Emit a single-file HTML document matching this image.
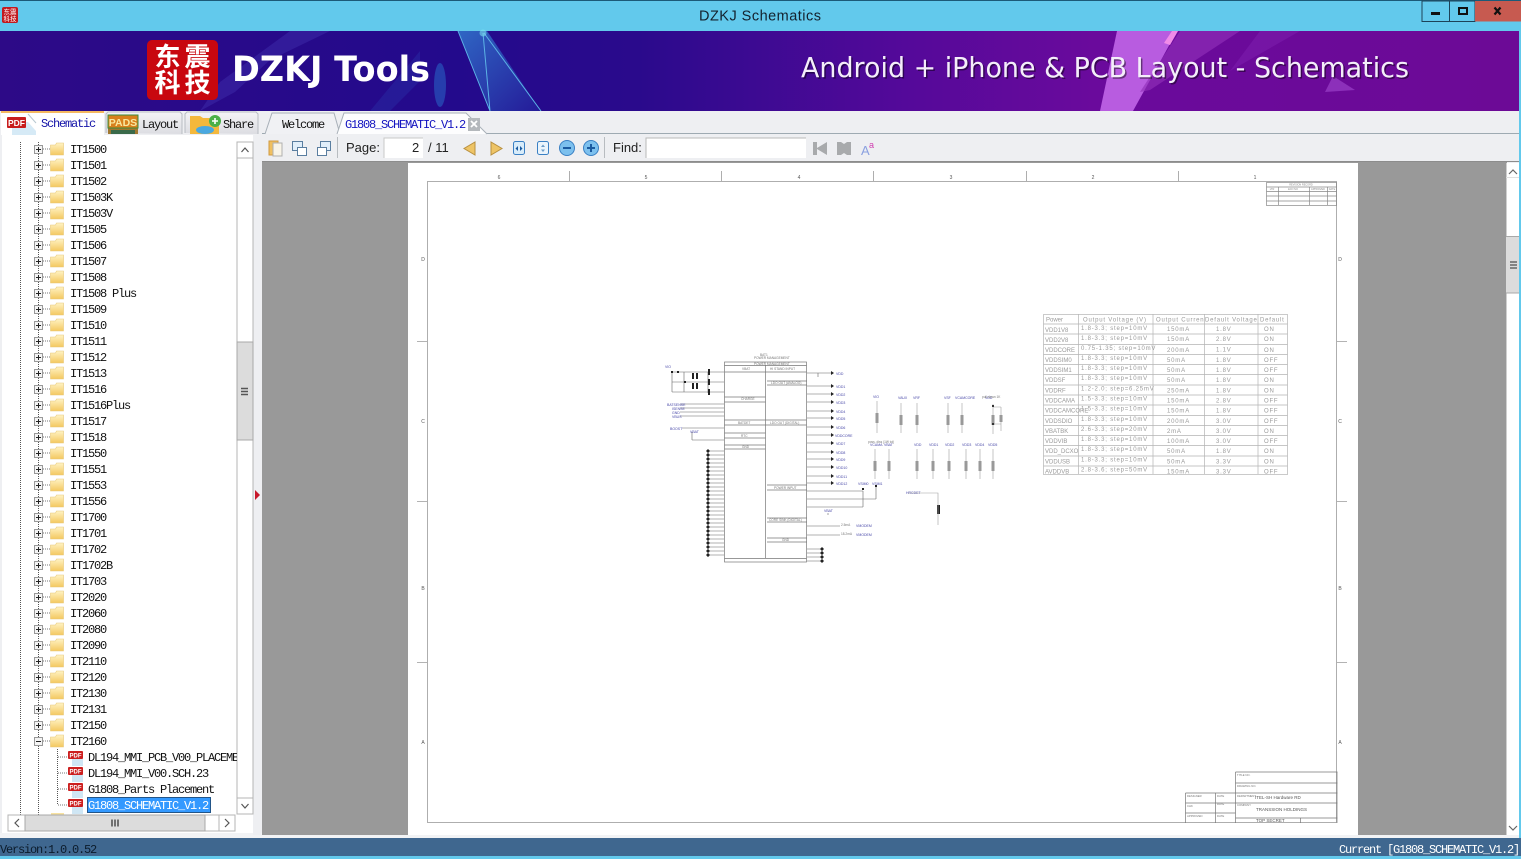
<!DOCTYPE html>
<html><head><meta charset="utf-8"><title>DZKJ Schematics</title>
<style>
html,body{margin:0;padding:0;width:1521px;height:859px;overflow:hidden;background:#62c9ec;font-family:"Liberation Sans","Noto Sans CJK SC",sans-serif}
.a{position:absolute}
.m{position:absolute;font-family:"Liberation Mono","Noto Sans CJK SC",monospace;font-size:12px;letter-spacing:-1.2px;line-height:16px;white-space:pre;color:#111}
#tree .m{left:70px}
#tree .f{left:88px}
.pt text{font-size:6px;letter-spacing:.8px}
.pt text:nth-child(5n+1){letter-spacing:0}
</style></head><body>
<svg class="a" style="left:0;top:0" width="1521" height="859" viewBox="0 0 1521 859" xmlns="http://www.w3.org/2000/svg">
<defs>
<linearGradient id="bg" x1="0" x2="1" y1="0" y2="0">
<stop offset="0" stop-color="#2d0a87"/><stop offset=".3" stop-color="#230a8c"/><stop offset=".42" stop-color="#2a0a8c"/><stop offset=".6" stop-color="#55099a"/><stop offset=".72" stop-color="#6a0a9c"/><stop offset="1" stop-color="#6c0a96"/></linearGradient>
<linearGradient id="fd" x1="0" x2="0" y1="0" y2="1"><stop offset="0" stop-color="#fff3c4"/><stop offset="1" stop-color="#f4c860"/></linearGradient>
<linearGradient id="tab" x1="0" x2="0" y1="0" y2="1"><stop offset="0" stop-color="#f4f4f6"/><stop offset="1" stop-color="#dcdde2"/></linearGradient>
<linearGradient id="st" x1="0" x2="1" y1="0" y2="1"><stop offset="0" stop-color="#2f66c4"/><stop offset="1" stop-color="#241a98"/></linearGradient>
<g id="folder"><path d="M0 3h5l1-2h7v12H0z" fill="url(#fd)" stroke="#e8c878" stroke-width=".6"/></g>
<g id="plus"><rect x=".5" y=".5" width="8" height="8" fill="#f4f4f4" stroke="#999"/><path d="M2 4.5h5M4.5 2v5" stroke="#222"/></g>
<g id="pdf"><path d="M4 3h11v12H4z" fill="#cfe6f4"/><rect x="0" y="0" width="15" height="8" rx="1" fill="#cc1f1f"/><text x="7.5" y="6.5" font-size="6" font-weight="bold" fill="#fff" text-anchor="middle" font-family="Liberation Sans">PDF</text></g>
</defs>
<rect width="1521" height="859" fill="#62c9ec"/>
<rect width="1521" height="1" fill="#1c5a78"/>
<!-- title -->
<rect x="2" y="7" width="16" height="16" rx="2" fill="#c21a1f"/>
<text x="10" y="14" font-size="6.5" fill="#fff" text-anchor="middle" font-family="Noto Sans CJK SC">东震</text>
<text x="10" y="21" font-size="6.5" fill="#fff" text-anchor="middle" font-family="Noto Sans CJK SC">科技</text>
<text x="760" y="20.5" font-size="14.5" fill="#14222e" text-anchor="middle" textLength="122" font-family="Liberation Sans">DZKJ Schematics</text>
<!-- window controls -->
<rect x="1422" y="1" width="53" height="20.5" fill="#62c9ec" stroke="#1d4258"/>
<path d="M1449.5 1v20" stroke="#1d4258"/>
<rect x="1475" y="1" width="46" height="20.5" fill="#c75a50"/>
<rect x="1431" y="12" width="9" height="3" fill="#111"/>
<rect x="1459" y="8" width="8" height="6" fill="none" stroke="#111" stroke-width="2"/>
<path d="M1494.5 7.5l6 7M1500.5 7.5l-6 7" stroke="#111" stroke-width="2.2"/>
<!-- banner -->
<rect x="0" y="31" width="1519" height="80" fill="url(#bg)"/>
<path d="M200 111L235 92 270 60 330 31H290L220 82Z" fill="#3d2aa8" opacity=".55"/>
<path d="M370 111h20l30-30v-30z" fill="#2a3ab0" opacity=".35"/>
<ellipse cx="440" cy="85" rx="6" ry="22" fill="#2a68c8" opacity=".55"/>
<path d="M458 31H487L541 111H490Z" fill="url(#st)"/>
<path d="M458 31L490 111M483 33L490 111M484 33L541 111" stroke="#5cb4e6" stroke-width="1" fill="none"/>
<circle cx="483" cy="33" r="3.5" fill="#7fe8f0" opacity=".55"/>
<path d="M1117 31H1177L1133 111H1100Z" fill="#b85ce0"/>
<path d="M1172 31h6l-8 14-6-2z" fill="#f08be8"/>
<path d="M1180 31H1240L1150 90 1140 92Z" fill="#9030b8" opacity=".65"/>
<path d="M1260 31h40l-70 40z" fill="#8020b0" opacity=".5"/>
<path d="M1325 92l30-2-22-14z" fill="#9a40c8" opacity=".7"/>
<rect x="147" y="40" width="71" height="60" rx="5" fill="#c8070f"/>
<text x="182.5" y="66" font-size="26" fill="#fff" text-anchor="middle" textLength="56" font-family="Noto Sans CJK SC" font-weight="bold">东震</text>
<text x="182.5" y="92" font-size="26" fill="#fff" text-anchor="middle" textLength="56" font-family="Noto Sans CJK SC" font-weight="bold">科技</text>
<text x="232" y="81" font-size="35" font-weight="bold" fill="#fff" textLength="198" font-family="DejaVu Sans" lengthAdjust="spacingAndGlyphs">DZKJ Tools</text>
<text x="801" y="77" font-size="28" fill="#000" opacity=".45" textLength="608" font-family="DejaVu Sans" lengthAdjust="spacingAndGlyphs" transform="translate(1.5,1.5)">Android + iPhone &amp; PCB Layout - Schematics</text>
<text x="801" y="77" font-size="28" fill="#f4eefa" textLength="608" font-family="DejaVu Sans" lengthAdjust="spacingAndGlyphs">Android + iPhone &amp; PCB Layout - Schematics</text>
<rect x="1519" y="31" width="2" height="80" fill="#62c9ec"/>
<!-- tab strip / chrome -->
<rect x="0" y="111" width="1519" height="727" fill="#eeeff2"/>
<rect x="262" y="133" width="1257" height="1" fill="#9eaab2"/>
<!-- left tabs -->
<rect x="1" y="111" width="103" height="24" fill="#fff"/>
<rect x="1" y="111" width="103" height="2" fill="#f4b860"/>
<path d="M12 122h16l8 9v4H12z" fill="#d6eaf6"/>
<path d="M28 114l8 9" stroke="#b8c8d0" fill="none"/>
<rect x="7" y="117" width="19" height="11" rx="1" fill="#c81d1d"/>
<text x="16.5" y="126" font-size="8.5" font-weight="bold" fill="#fff" text-anchor="middle" font-family="Liberation Sans">PDF</text>
<path d="M106 133v-19l2-2h72l2 2v20" fill="url(#tab)" stroke="#b8bcc2"/>
<rect x="108" y="115" width="30" height="19" fill="#a07830"/>
<rect x="108" y="115" width="30" height="13" fill="#d8801c" stroke="#3c8a3c"/>
<text x="123" y="126" font-size="10.5" font-weight="bold" fill="#f8e8a0" text-anchor="middle" font-family="Liberation Sans">PADS</text>
<rect x="111" y="130" width="24" height="4" fill="#3a6a4a"/>
<path d="M185 133v-19l2-2h69l2 2v20" fill="url(#tab)" stroke="#b8bcc2"/>
<path d="M190 134v-18h10l3 2h16v16z" fill="#f4b83c"/>
<ellipse cx="205" cy="130" rx="9" ry="4" fill="#4aa8e0"/>
<circle cx="215" cy="121" r="6" fill="#4ab048"/>
<path d="M212 121h6M215 118v6" stroke="#fff" stroke-width="1.6"/>
<!-- right tabs -->
<path d="M265 134l7-21h62l6 21" fill="#f0f1f4" stroke="#a8b0b8"/>
<path d="M337 134l7-21h122l21 21" fill="#fdfdfe" stroke="#a8b0b8"/>
<rect x="468" y="118" width="12" height="13" fill="#b4b8bc"/>
<path d="M471 121l6 6M477 121l-6 6" stroke="#fff" stroke-width="1.8"/>
<!-- tree panel -->
<rect x="2" y="135" width="251" height="698" fill="#fff"/>
<rect x="0" y="833" width="262" height="5" fill="#f2f3f5"/>
<rect x="253" y="134" width="8" height="701" fill="#eeeff2"/>
<path d="M255 490l5 5-5 5z" fill="#c8182a"/>
<path d="M20.5 142V815M38.5 142V815M57.5 749V805" stroke="#555" stroke-dasharray="1 1" fill="none"/>
<path stroke="#777" stroke-dasharray="1 1" fill="none" d="M43 149h7M43 165h7M43 181h7M43 197h7M43 213h7M43 229h7M43 245h7M43 261h7M43 277h7M43 293h7M43 309h7M43 325h7M43 341h7M43 357h7M43 373h7M43 389h7M43 405h7M43 421h7M43 437h7M43 453h7M43 469h7M43 485h7M43 501h7M43 517h7M43 533h7M43 549h7M43 565h7M43 581h7M43 597h7M43 613h7M43 629h7M43 645h7M43 661h7M43 677h7M43 693h7M43 709h7M43 725h7M43 741h7M58 757h10M58 773h10M58 789h10M58 805h10"/>
<use href="#plus" x="34" y="145"/><use href="#folder" x="50.500" y="142"/>
<use href="#plus" x="34" y="161"/><use href="#folder" x="50.500" y="158"/>
<use href="#plus" x="34" y="177"/><use href="#folder" x="50.500" y="174"/>
<use href="#plus" x="34" y="193"/><use href="#folder" x="50.500" y="190"/>
<use href="#plus" x="34" y="209"/><use href="#folder" x="50.500" y="206"/>
<use href="#plus" x="34" y="225"/><use href="#folder" x="50.500" y="222"/>
<use href="#plus" x="34" y="241"/><use href="#folder" x="50.500" y="238"/>
<use href="#plus" x="34" y="257"/><use href="#folder" x="50.500" y="254"/>
<use href="#plus" x="34" y="273"/><use href="#folder" x="50.500" y="270"/>
<use href="#plus" x="34" y="289"/><use href="#folder" x="50.500" y="286"/>
<use href="#plus" x="34" y="305"/><use href="#folder" x="50.500" y="302"/>
<use href="#plus" x="34" y="321"/><use href="#folder" x="50.500" y="318"/>
<use href="#plus" x="34" y="337"/><use href="#folder" x="50.500" y="334"/>
<use href="#plus" x="34" y="353"/><use href="#folder" x="50.500" y="350"/>
<use href="#plus" x="34" y="369"/><use href="#folder" x="50.500" y="366"/>
<use href="#plus" x="34" y="385"/><use href="#folder" x="50.500" y="382"/>
<use href="#plus" x="34" y="401"/><use href="#folder" x="50.500" y="398"/>
<use href="#plus" x="34" y="417"/><use href="#folder" x="50.500" y="414"/>
<use href="#plus" x="34" y="433"/><use href="#folder" x="50.500" y="430"/>
<use href="#plus" x="34" y="449"/><use href="#folder" x="50.500" y="446"/>
<use href="#plus" x="34" y="465"/><use href="#folder" x="50.500" y="462"/>
<use href="#plus" x="34" y="481"/><use href="#folder" x="50.500" y="478"/>
<use href="#plus" x="34" y="497"/><use href="#folder" x="50.500" y="494"/>
<use href="#plus" x="34" y="513"/><use href="#folder" x="50.500" y="510"/>
<use href="#plus" x="34" y="529"/><use href="#folder" x="50.500" y="526"/>
<use href="#plus" x="34" y="545"/><use href="#folder" x="50.500" y="542"/>
<use href="#plus" x="34" y="561"/><use href="#folder" x="50.500" y="558"/>
<use href="#plus" x="34" y="577"/><use href="#folder" x="50.500" y="574"/>
<use href="#plus" x="34" y="593"/><use href="#folder" x="50.500" y="590"/>
<use href="#plus" x="34" y="609"/><use href="#folder" x="50.500" y="606"/>
<use href="#plus" x="34" y="625"/><use href="#folder" x="50.500" y="622"/>
<use href="#plus" x="34" y="641"/><use href="#folder" x="50.500" y="638"/>
<use href="#plus" x="34" y="657"/><use href="#folder" x="50.500" y="654"/>
<use href="#plus" x="34" y="673"/><use href="#folder" x="50.500" y="670"/>
<use href="#plus" x="34" y="689"/><use href="#folder" x="50.500" y="686"/>
<use href="#plus" x="34" y="705"/><use href="#folder" x="50.500" y="702"/>
<use href="#plus" x="34" y="721"/><use href="#folder" x="50.500" y="718"/>
<rect x="34.500" y="737.500" width="8" height="8" fill="#f4f4f4" stroke="#999"/><path d="M36 741.500h5" stroke="#222"/><use href="#folder" x="50.500" y="734"/>
<use href="#pdf" x="68" y="751"/><use href="#pdf" x="68" y="767"/><use href="#pdf" x="68" y="783"/><use href="#pdf" x="68" y="799"/>
<rect x="87" y="797" width="124" height="16" fill="#3399ff"/>
<rect x="87.500" y="797.500" width="123" height="15" fill="none" stroke="#111" stroke-dasharray="1 1"/>
<rect x="212" y="797" width="25" height="18" fill="#fff"/>
<rect x="51" y="813" width="13" height="2" fill="#f8e2a0"/>
<!-- tree scrollbars -->
<rect x="237" y="142" width="16" height="672" fill="#fff" stroke="#b4b4b4"/>
<rect x="237" y="142" width="16" height="16" fill="#fff" stroke="#b4b4b4"/>
<path d="M241 152l3.500-4 3.500 4" transform="translate(.5 0)" fill="none" stroke="#555" stroke-width="1.2"/>
<rect x="237" y="342" width="16" height="98" fill="#dcdcdc" stroke="#a8a8a8"/>
<path d="M241 388.500h7M241 391.500h7M241 394.500h7" stroke="#555" stroke-width="1.6"/>
<rect x="237" y="798" width="16" height="16" fill="#fff" stroke="#b4b4b4"/>
<path d="M241 804l3.500 4 3.500-4" transform="translate(.5 0)" fill="none" stroke="#555" stroke-width="1.2"/>
<rect x="8" y="815" width="227" height="16" fill="#fff" stroke="#b4b4b4"/>
<rect x="8" y="815" width="17" height="16" fill="#fff" stroke="#b4b4b4"/>
<path d="M19 819l-4 4 4 4" fill="none" stroke="#555" stroke-width="1.2"/>
<rect x="25" y="815" width="180" height="16" fill="#dcdcdc" stroke="#a8a8a8"/>
<path d="M112 819.500v7M115 819.500v7M118 819.500v7" stroke="#555" stroke-width="1.6"/>
<rect x="219" y="815" width="16" height="16" fill="#fff" stroke="#b4b4b4"/>
<path d="M225 819l4 4-4 4" fill="none" stroke="#555" stroke-width="1.2"/>
<!-- toolbar -->
<path d="M269 141h9v14h-9z" fill="#f0c060" stroke="#d09a40"/><path d="M273 143h9v13h-9z" fill="#f8f4e8" stroke="#b0b0b0"/>
<path d="M292.500 141.500h10v9h-10z" fill="#e0eefa" stroke="#5a7ea0"/><path d="M297.500 147.500h9v8h-9z" fill="#fff" stroke="#5a7ea0"/>
<path d="M330.500 141.500h-10v9h10z" fill="#e0eefa" stroke="#5a7ea0"/><path d="M326.500 147.500h-9v8h9z" fill="#fff" stroke="#5a7ea0"/>
<rect x="337" y="137" width="1" height="21" fill="#b8bcc0"/>
<rect x="384" y="138" width="39" height="20" fill="#fff"/>
<path d="M384 158v-20h39" fill="none" stroke="#c8c8c8"/>
<path d="M475 142v13l-11-6.500z" fill="#eec466" stroke="#b89040"/>
<path d="M491 142v13l11-6.500z" fill="#eec466" stroke="#b89040"/>
<rect x="513.500" y="141.500" width="11" height="13" rx="2" fill="#d8ecfa" stroke="#3a80c4"/>
<path d="M518 146v5l-2.500-2.500zM520 146v5l2.500-2.500z" fill="#1a5aa0"/>
<rect x="537.500" y="141.500" width="11" height="13" rx="2" fill="#eaf4fc" stroke="#3a80c4"/>
<path d="M543 144.500l2 2.500h-4zM543 152l2-2.500h-4z" fill="#6a9cc8"/>
<circle cx="567" cy="148" r="7.500" fill="#7cc0ee" stroke="#3a80c4"/><path d="M563 148h8" stroke="#1a5aa0" stroke-width="2"/>
<circle cx="591" cy="148" r="7.500" fill="#7cc0ee" stroke="#3a80c4"/><path d="M587 148h8M591 144v8" stroke="#1a5aa0" stroke-width="2"/>
<rect x="604" y="137" width="1" height="21" fill="#b8bcc0"/>
<rect x="646" y="138" width="160" height="20" fill="#fff"/>
<path d="M646 158v-20h160" fill="none" stroke="#b8b8b8"/>
<path d="M813 142h4v6l10-6v13l-10-6v6h-4z" fill="#a8aaac"/>
<path d="M837 142h4l3 2 3-2h4v13h-4l-3-2-3 2h-4z" fill="#a8aaac"/>
<text x="861" y="155" font-size="13" fill="#8aa0e0" font-family="Liberation Sans">A</text>
<text x="869" y="148" font-size="9" fill="#d040b0" font-family="Liberation Sans">a</text>
<!-- viewer -->
<rect x="262" y="162" width="1245" height="673" fill="#999"/>
<rect x="262" y="161" width="1257" height="1" fill="#8c8c8c"/>
<rect x="408" y="163" width="950" height="672" fill="#fff"/>
<rect x="1506" y="163" width="14" height="672" fill="#fff"/>
<path d="M1506.500 163v672" stroke="#cfcfcf"/>
<path d="M1509 174l4-4 4 4" fill="none" stroke="#666" stroke-width="1.200"/>
<rect x="1506" y="177" width="14" height="1" fill="#e0e0e0"/>
<rect x="1506" y="236" width="14" height="57" fill="#dcdcdc"/>
<path d="M1506 236.500h14M1506 293h14" stroke="#a8a8a8"/>
<path d="M1510 262h7M1510 265h7M1510 268h7" stroke="#666" stroke-width="1.500"/>
<path d="M1509 826l4 4 4-4" fill="none" stroke="#666" stroke-width="1.200"/>
<rect x="262" y="835" width="1257" height="3" fill="#f2f3f5"/>
<!-- status bar -->
<rect x="0" y="838" width="1521" height="18" fill="#3f678f"/>
<rect x="1519" y="111" width="2" height="727" fill="#62c9ec"/>
<!-- schematic: frame -->
<g fill="none" stroke="#9a9a9a" stroke-width=".8">
<rect x="427.500" y="181.500" width="909" height="641"/>
<path d="M569.500 171v10M721.500 171v10M873.500 171v10M1026.500 171v10M1178.500 171v10M417 341.500h10M417 501.500h10M417 662.500h10M1337 341.500h10M1337 501.500h10M1337 662.500h10"/>
</g>
<g font-family="Liberation Sans" font-size="5" fill="#555" text-anchor="middle">
<text x="499" y="179">6</text><text x="646" y="179">5</text><text x="799" y="179">4</text><text x="951" y="179">3</text><text x="1093" y="179">2</text><text x="1255" y="179">1</text>
<text x="423" y="261">D</text><text x="423" y="423">C</text><text x="423" y="590">B</text><text x="423" y="744">A</text>
<text x="1340" y="261">D</text><text x="1340" y="423">C</text><text x="1340" y="590">B</text><text x="1340" y="744">A</text>
</g>
<!-- rev table -->
<g fill="none" stroke="#888" stroke-width=".7">
<rect x="1266.500" y="182.500" width="70" height="23"/>
<path d="M1266.500 187h70M1266.500 191.500h70M1266.500 196h70M1266.500 201h70M1278.500 187v18M1309.500 187v18M1327.500 187v18"/>
</g>
<g font-family="Liberation Sans" font-size="2.500" fill="#888" text-anchor="middle">
<text x="1301" y="185.500">REVISION RECORD</text><text x="1272" y="190">LTR</text><text x="1293" y="190">ECO NO</text><text x="1318" y="190">APPROVED</text><text x="1332" y="190">DATE</text>
</g>
<!-- power table -->
<g fill="none" stroke="#b4b4b4" stroke-width=".7">
<rect x="1043.500" y="314.500" width="244" height="160"/>
<path d="M1043.500 324h244M1043.500 334h244M1043.500 344.500h244M1043.500 354.500h244M1043.500 364.500h244M1043.500 374.500h244M1043.500 385h244M1043.500 395h244M1043.500 405h244M1043.500 415.500h244M1043.500 425.500h244M1043.500 435.500h244M1043.500 445.500h244M1043.500 456h244M1043.500 466h244"/>
<path d="M1078.500 314v160M1153 314v160M1204.500 314v160M1258 314v160"/>
</g>
<g class="pt" font-family="Liberation Sans" fill="#9a9a9a">
<text x="1046" y="321.500">Power</text><text x="1083" y="321.500">Output Voltage (V)</text><text x="1156" y="321.500">Output Curren</text><text x="1205" y="321.500">Default Voltage</text><text x="1260" y="321.500">Default</text>
<text x="1045" y="332">VDD1V8</text><text x="1081" y="330">1.8-3.3; step=10mV</text><text x="1167" y="331">150mA</text><text x="1216" y="331">1.8V</text><text x="1264" y="331">ON</text>
<text x="1045" y="342">VDD2V8</text><text x="1081" y="340">1.8-3.3; step=10mV</text><text x="1167" y="341">150mA</text><text x="1216" y="341">2.8V</text><text x="1264" y="341">ON</text>
<text x="1045" y="352">VDDCORE</text><text x="1081" y="350">0.75-1.35; step=10mV</text><text x="1167" y="352">200mA</text><text x="1216" y="351.500">1.1V</text><text x="1264" y="352">ON</text>
<text x="1045" y="362">VDDSIM0</text><text x="1081" y="360">1.8-3.3; step=10mV</text><text x="1167" y="362">50mA</text><text x="1216" y="362">1.8V</text><text x="1264" y="362">OFF</text>
<text x="1045" y="372">VDDSIM1</text><text x="1081" y="370">1.8-3.3; step=10mV</text><text x="1167" y="372">50mA</text><text x="1216" y="372">1.8V</text><text x="1264" y="372">OFF</text>
<text x="1045" y="382">VDDSF</text><text x="1081" y="380">1.8-3.3; step=10mV</text><text x="1167" y="382">50mA</text><text x="1216" y="382">1.8V</text><text x="1264" y="382">ON</text>
<text x="1045" y="392.500">VDDRF</text><text x="1081" y="390.500">1.2-2.0; step=6.25mV</text><text x="1167" y="392.500">250mA</text><text x="1216" y="392.500">1.8V</text><text x="1264" y="392.500">ON</text>
<text x="1045" y="402.500">VDDCAMA</text><text x="1081" y="400.500">1.5-3.3; step=10mV</text><text x="1167" y="402.500">150mA</text><text x="1216" y="402.500">2.8V</text><text x="1264" y="402.500">OFF</text>
<text x="1045" y="412.500">VDDCAMCORE</text><text x="1081" y="410.500">1.5-3.3; step=10mV</text><text x="1167" y="412.500">150mA</text><text x="1216" y="412.500">1.8V</text><text x="1264" y="412.500">OFF</text>
<text x="1045" y="423">VDDSDIO</text><text x="1081" y="421">1.8-3.3; step=10mV</text><text x="1167" y="423">200mA</text><text x="1216" y="423">3.0V</text><text x="1264" y="423">OFF</text>
<text x="1045" y="433">VBATBK</text><text x="1081" y="431">2.6-3.3; step=20mV</text><text x="1167" y="433">2mA</text><text x="1216" y="433">3.0V</text><text x="1264" y="433">ON</text>
<text x="1045" y="443">VDDVIB</text><text x="1081" y="441">1.8-3.3; step=10mV</text><text x="1167" y="443">100mA</text><text x="1216" y="443">3.0V</text><text x="1264" y="443">OFF</text>
<text x="1045" y="453">VDD_DCXO</text><text x="1081" y="451">1.8-3.3; step=10mV</text><text x="1167" y="453">50mA</text><text x="1216" y="453">1.8V</text><text x="1264" y="453">ON</text>
<text x="1045" y="463.500">VDDUSB</text><text x="1081" y="461.500">1.8-3.3; step=10mV</text><text x="1167" y="463.500">50mA</text><text x="1216" y="463.500">3.3V</text><text x="1264" y="463.500">ON</text>
<text x="1045" y="473.500">AVDDVB</text><text x="1081" y="471.500">2.8-3.6; step=50mV</text><text x="1167" y="473.500">150mA</text><text x="1216" y="473.500">3.3V</text><text x="1264" y="473.500">OFF</text>
</g>
<!-- IC -->
<g fill="none" stroke="#777" stroke-width=".7">
<rect x="724.500" y="362" width="82" height="200"/>
<path d="M724.500 365.500h82M724.500 558.500h82M765.500 365v193"/>
<path d="M724.500 372h82M767 381h40M767 385h40M724.500 397h41M724.500 402h41M724.500 420h82M724.500 425h82M724.500 433h41M724.500 438h41M724.500 445h41M724.500 449h41M767 485h40M767 490h40M767 518h40M767 522h40M767 538h40M767 542h40"/>
</g>
<g fill="none" stroke="#666" stroke-width=".6">
<path d="M672 372h52M672 382h52M672 392h52M672 372v20M684 372v20M708 372v21"/>
<path d="M680 404h44M680 408h44M680 412h44M680 416h44M682 428h42M692 440h32M692 432v8"/>
<path d="M708 451v106"/>
<path d="M708 451h16M708 455h16M708 459h16M708 463h16M708 467h16M708 471h16M708 475h16M708 479h16M708 483h16M708 487h16M708 491h16M708 495h16M708 499h16M708 503h16M708 507h16M708 511h16M708 515h16M708 519h16M708 523h16M708 527h16M708 531h16M708 535h16M708 539h16M708 543h16M708 547h16M708 551h16M708 555h16"/>
<path d="M807 373h24M807 386h24M807 394h24M807 402h24M807 411h24M807 418h24M807 427h24M807 435h24M807 443h24M807 452h24M807 459h24M807 467h24M807 476h24M807 483h24M807 491h56M807 499h69M807 507h56M863 491v16M876 486v13M807 526h33M807 535h33M807 549h15M807 553h15M807 557h15M807 561h15M822 549v12M818 373v4M828 515v-2"/>
</g>
<g fill="#222">
<path d="M706 451l2-2 2 2-2 2zM706 455l2-2 2 2-2 2zM706 459l2-2 2 2-2 2zM706 463l2-2 2 2-2 2zM706 467l2-2 2 2-2 2zM706 471l2-2 2 2-2 2zM706 475l2-2 2 2-2 2zM706 479l2-2 2 2-2 2zM706 483l2-2 2 2-2 2zM706 487l2-2 2 2-2 2zM706 491l2-2 2 2-2 2zM706 495l2-2 2 2-2 2zM706 499l2-2 2 2-2 2zM706 503l2-2 2 2-2 2zM706 507l2-2 2 2-2 2zM706 511l2-2 2 2-2 2zM706 515l2-2 2 2-2 2zM706 519l2-2 2 2-2 2zM706 523l2-2 2 2-2 2zM706 527l2-2 2 2-2 2zM706 531l2-2 2 2-2 2zM706 535l2-2 2 2-2 2zM706 539l2-2 2 2-2 2zM706 543l2-2 2 2-2 2zM706 547l2-2 2 2-2 2zM706 551l2-2 2 2-2 2zM706 555l2-2 2 2-2 2z"/>
<path d="M820 549l2-2 2 2-2 2zM820 553l2-2 2 2-2 2zM820 557l2-2 2 2-2 2zM820 561l2-2 2 2-2 2z"/>
<path d="M831 371l3 2-3 2zM831 384l3 2-3 2zM831 392l3 2-3 2zM831 400l3 2-3 2zM831 409l3 2-3 2zM831 416l3 2-3 2zM831 425l3 2-3 2zM831 433l3 2-3 2zM831 441l3 2-3 2zM831 450l3 2-3 2zM831 457l3 2-3 2zM831 465l3 2-3 2zM831 474l3 2-3 2zM831 481l3 2-3 2z"/>
<rect x="671" y="371" width="2" height="2"/><rect x="677" y="371" width="2" height="2"/><rect x="684" y="381" width="2" height="2"/>
<rect x="692" y="373" width="2" height="6"/><rect x="696" y="373" width="2" height="6"/><rect x="692" y="383" width="2" height="6"/><rect x="696" y="383" width="2" height="6"/>
<rect x="708" y="369" width="2" height="6"/><rect x="708" y="379" width="2" height="6"/><rect x="708" y="389" width="2" height="6"/>
<rect x="862" y="488" width="2" height="2"/><rect x="875" y="485" width="2" height="2"/><rect x="937" y="505" width="3" height="9"/>
</g>
<g font-family="Liberation Sans" font-size="3.500" fill="#4848a8">
<text x="665" y="368">VIO</text><text x="667" y="406">BATSENSE</text><text x="672" y="410">ISENSE</text><text x="672" y="414">GND</text><text x="672" y="418">VBUS</text><text x="670" y="430">BOOST</text><text x="690" y="433">VBAT</text>
<text x="836" y="375">VDD</text><text x="836" y="388">VDD1</text><text x="836" y="396">VDD2</text><text x="836" y="404">VDD3</text><text x="836" y="413">VDD4</text><text x="836" y="420">VDD5</text><text x="836" y="429">VDD6</text><text x="835" y="437">VDDCORE</text><text x="836" y="445">VDD7</text><text x="836" y="454">VDD8</text><text x="836" y="461">VDD9</text><text x="836" y="469">VDD10</text><text x="836" y="478">VDD11</text><text x="836" y="485">VDD12</text>
<text x="858" y="485">VSIM0</text><text x="872" y="485">VSIM1</text><text x="824" y="512">VBAT</text>
<text x="873" y="398">VIO</text><text x="898" y="399">VAUX</text><text x="913" y="399">VRF</text><text x="944" y="399">VSF</text><text x="955" y="399">VCAMCORE</text>
<text x="870" y="446">VCAMA</text><text x="884" y="446">VBAT</text><text x="914" y="446">VDD</text><text x="929" y="446">VDD1</text><text x="945" y="446">VDD2</text><text x="962" y="446">VDD3</text><text x="975" y="446">VDD4</text><text x="988" y="446">VDD5</text><text x="985" y="399">VDD</text>
<text x="906" y="494">HRCDET</text><text x="856" y="527">VMODEM</text><text x="856" y="536">VMODEM</text>
</g>
<g font-family="Liberation Sans" font-size="3.200" fill="#777">
<text x="760" y="356">BAT1</text><text x="754" y="359">POWER MANAGEMENT</text><text x="754" y="365">POWER MANAGEMENT</text>
<text x="742" y="370">VBAT</text><text x="770" y="370">HI STAND INPUT</text><text x="771" y="384">LDO OUT (ANALOG)</text><text x="741" y="400">CHARGE</text><text x="738" y="424">BATDET</text><text x="770" y="424">LDO OUT (DIGITAL)</text><text x="741" y="437">RTC</text><text x="742" y="448">GND</text><text x="774" y="489">POWER INPUT</text><text x="769" y="521">CORE SINK (DIGITAL)</text><text x="782" y="541">GND</text>
<text x="841" y="526">2.5mA</text><text x="841" y="535">18.2mA</text><text x="868" y="443">poss. diss (1W tol)</text><text x="982" y="398">pull-down 1K</text>
</g>
<!-- rails -->
<g fill="none" stroke="#a0a0a0" stroke-width=".6">
<path d="M877 401v32M901 403v30M917 403v30M948 403v30M962 403v30M993 404v30M1001 407v24M993 407h8M993 424h8"/>
<path d="M875 449v30M889 449v30M917 449v30M933 449v30M949 449v30M966 449v30M980 449v30M993 449v30"/>
<path d="M908 493h30v32"/>
</g>
<g fill="#999">
<rect x="875.500" y="413" width="3" height="10"/><rect x="899.500" y="415" width="3" height="10"/><rect x="915.500" y="415" width="3" height="10"/><rect x="946.500" y="415" width="3" height="10"/><rect x="960.500" y="415" width="3" height="10"/><rect x="991.500" y="415" width="3" height="10"/><rect x="999.500" y="415" width="3" height="7"/>
<rect x="873.500" y="461" width="3" height="10"/><rect x="887.500" y="461" width="3" height="10"/><rect x="915.500" y="461" width="3" height="10"/><rect x="931.500" y="461" width="3" height="10"/><rect x="947.500" y="461" width="3" height="10"/><rect x="964.500" y="461" width="3" height="10"/><rect x="978.500" y="461" width="3" height="10"/><rect x="991.500" y="461" width="3" height="10"/>
</g>
<g fill="#333"><rect x="992" y="405" width="2" height="2"/><rect x="992" y="423" width="2" height="2"/></g>
<!-- title block -->
<g fill="none" stroke="#777" stroke-width=".7">
<path d="M1185.500 793h152M1235.500 772h102M1235.500 783h102M1235.500 772v51M1235.500 803h102M1235.500 818h102M1185.500 803h50M1185.500 813h50M1185.500 793v30M1215.500 793v30M1300.500 818v5M1337 772v51"/>
</g>
<g font-family="Liberation Sans" font-size="2.800" fill="#777">
<text x="1237" y="776">TITLE NO.</text><text x="1237" y="787">DRAWING NO.</text><text x="1237" y="797">DEPARTMENT</text><text x="1237" y="806">COMPANY</text><text x="1187" y="797">DESIGNER</text><text x="1187" y="807">CHK</text><text x="1187" y="817">APPROVED</text><text x="1217" y="797">DATE</text><text x="1217" y="805">DATE</text><text x="1217" y="817">DATE</text>
</g>
<g font-family="Liberation Sans" font-size="4.500" fill="#555">
<text x="1255" y="799">ITEL-SH Hardware RD</text><text x="1256" y="811">TRANSSION HOLDINGS</text><text x="1256" y="822">TOP SECRET</text>
</g>
</svg>
<!-- html text -->
<div class="m" style="left:41px;top:116px;color:#1414a8">Schematic</div>
<div class="m" style="left:142px;top:117px">Layout</div>
<div class="m" style="left:223px;top:117px">Share</div>
<div class="m" style="left:282px;top:117px">Welcome</div>
<div class="m" style="left:345px;top:117px;color:#1414c0">G1808_SCHEMATIC_V1.2</div>
<div class="a" style="left:346px;top:140px;font-size:13px;line-height:16px;color:#222">Page:</div>
<div class="a" style="left:412px;top:140px;font-size:13px;line-height:16px;color:#222">2</div>
<div class="a" style="left:428px;top:140px;font-size:13px;line-height:16px;color:#222">/ 11</div>
<div class="a" style="left:613px;top:140px;font-size:13px;line-height:16px;color:#222">Find:</div>
<div id="tree">
<div class="m" style="top:142px">IT1500</div>
<div class="m" style="top:158px">IT1501</div>
<div class="m" style="top:174px">IT1502</div>
<div class="m" style="top:190px">IT1503K</div>
<div class="m" style="top:206px">IT1503V</div>
<div class="m" style="top:222px">IT1505</div>
<div class="m" style="top:238px">IT1506</div>
<div class="m" style="top:254px">IT1507</div>
<div class="m" style="top:270px">IT1508</div>
<div class="m" style="top:286px">IT1508 Plus</div>
<div class="m" style="top:302px">IT1509</div>
<div class="m" style="top:318px">IT1510</div>
<div class="m" style="top:334px">IT1511</div>
<div class="m" style="top:350px">IT1512</div>
<div class="m" style="top:366px">IT1513</div>
<div class="m" style="top:382px">IT1516</div>
<div class="m" style="top:398px">IT1516Plus</div>
<div class="m" style="top:414px">IT1517</div>
<div class="m" style="top:430px">IT1518</div>
<div class="m" style="top:446px">IT1550</div>
<div class="m" style="top:462px">IT1551</div>
<div class="m" style="top:478px">IT1553</div>
<div class="m" style="top:494px">IT1556</div>
<div class="m" style="top:510px">IT1700</div>
<div class="m" style="top:526px">IT1701</div>
<div class="m" style="top:542px">IT1702</div>
<div class="m" style="top:558px">IT1702B</div>
<div class="m" style="top:574px">IT1703</div>
<div class="m" style="top:590px">IT2020</div>
<div class="m" style="top:606px">IT2060</div>
<div class="m" style="top:622px">IT2080</div>
<div class="m" style="top:638px">IT2090</div>
<div class="m" style="top:654px">IT2110</div>
<div class="m" style="top:670px">IT2120</div>
<div class="m" style="top:686px">IT2130</div>
<div class="m" style="top:702px">IT2131</div>
<div class="m" style="top:718px">IT2150</div>
<div class="m" style="top:734px">IT2160</div>
<div class="m f" style="top:750px;width:149px;overflow:hidden">DL194_MMI_PCB_V00_PLACEMENT</div>
<div class="m f" style="top:766px">DL194_MMI_V00.SCH.23</div>
<div class="m f" style="top:782px">G1808_Parts Placement</div>
<div class="m f" style="top:798px;color:#fff">G1808_SCHEMATIC_V1.2</div>
</div>
<div class="m" style="left:0;top:842px;color:#0c1c2c">Version:1.0.0.52</div>
<div class="m" style="left:1339px;top:842px;color:#fff">Current [G1808_SCHEMATIC_V1.2]</div>
</body></html>
